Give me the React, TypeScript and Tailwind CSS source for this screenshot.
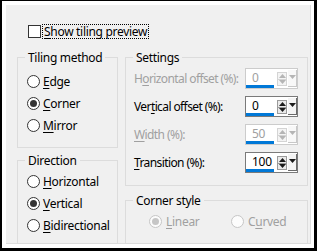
import React from "react";

function U({ children }: { children: React.ReactNode }) {
  return <span className="underline underline-offset-[2px]">{children}</span>;
}

function Radio({
  checked,
  disabled,
  children,
}: {
  checked?: boolean;
  disabled?: boolean;
  children: React.ReactNode;
}) {
  return (
    <div className="flex items-center h-[22px] whitespace-nowrap">
      <span
        className={
          disabled
            ? "w-[13px] h-[13px] shrink-0 rounded-full border border-[#c6c6c6] bg-[#fcfcfc] flex items-center justify-center"
            : "w-[13px] h-[13px] shrink-0 rounded-full border border-[#333333] bg-white flex items-center justify-center"
        }
      >
        {checked && (
          <span
            className={
              disabled
                ? "w-[7px] h-[7px] rounded-full bg-[#c6c6c6]"
                : "w-[7px] h-[7px] rounded-full bg-[#333333]"
            }
          />
        )}
      </span>
      <span className={disabled ? "ml-[4px] text-[#a0a0a0]" : "ml-[3px] text-black"}>{children}</span>
    </div>
  );
}

function Tri({ up, color }: { up?: boolean; color: string }) {
  return (
    <svg width="7" height="4" viewBox="0 0 7 4" className="block">
      {up ? (
        <path d="M0 4 L3.5 0 L7 4 Z" fill={color} />
      ) : (
        <path d="M0 0 L7 0 L3.5 4 Z" fill={color} />
      )}
    </svg>
  );
}

function Spin({ value, disabled }: { value: string; disabled?: boolean }) {
  const arrow = disabled ? "#b5b5b5" : "#1a1a1a";
  return (
    <div
      className={
        disabled
          ? "w-[53px] h-[21px] shrink-0 border border-[#cccccc] bg-white flex"
          : "w-[53px] h-[21px] shrink-0 border border-[#7a7a7a] bg-white flex"
      }
    >
      <div className="w-[29px] flex flex-col justify-between">
        <span
          className={
            disabled
              ? "pl-[6px] pt-[1px] leading-[15px] text-[#a0a0a0]"
              : "pl-[6px] pt-[1px] leading-[15px] text-black"
          }
        >
          {value}
        </span>
        <div className="w-[28px] h-[3px] bg-[#0078d7]" />
      </div>
      <div className="flex items-start pt-[3px] pl-[2px]">
        <div
          className={
            disabled
              ? "w-[10px] h-[14px] border border-[#d4d4d4] bg-[#f4f4f4] flex flex-col"
              : "w-[10px] h-[14px] border border-[#9a9a9a] bg-[#eaeaea] flex flex-col"
          }
        >
          <div
            className={
              disabled
                ? "flex-1 flex items-center justify-center border-b border-[#d4d4d4]"
                : "flex-1 flex items-center justify-center border-b border-[#9a9a9a]"
            }
          >
            <Tri up color={arrow} />
          </div>
          <div className="flex-1 flex items-center justify-center">
            <Tri color={arrow} />
          </div>
        </div>
      </div>
      <div className="flex items-start pt-[1px] pl-[1px]">
        <div
          className={
            disabled
              ? "w-[9px] h-[17px] bg-[#f8f8f8] border-r border-b border-[#c8c8c8] flex justify-center pt-[5px]"
              : "w-[9px] h-[17px] bg-[#f4f4f4] border-r border-b border-[#6a6a6a] flex justify-center pt-[5px]"
          }
        >
          <Tri color={arrow} />
        </div>
      </div>
    </div>
  );
}

function Row({
  label,
  value,
  disabled,
}: {
  label: React.ReactNode;
  value: string;
  disabled?: boolean;
}) {
  return (
    <div className="flex items-center h-[21px] whitespace-nowrap">
      <div
        className={
          disabled
            ? "w-[111px] shrink-0 text-[#a0a0a0] tracking-[-0.6px]"
            : "w-[111px] shrink-0 text-black tracking-[-0.6px]"
        }
      >
        {label}
      </div>
      <Spin value={value} disabled={disabled} />
    </div>
  );
}

function Group({
  title,
  className,
  children,
}: {
  title: string;
  className: string;
  children: React.ReactNode;
}) {
  return (
    <fieldset className={"border border-[#dcdcdc] min-w-0 " + className}>
      <legend className="ml-[7px] px-[3px] leading-[15px] text-black whitespace-nowrap">{title}</legend>
      {children}
    </fieldset>
  );
}

export default function App() {
  return (
    <div className="w-[317px] h-[251px] bg-white border-black border-t border-l-2 border-r-[3px] border-b-[3px] pt-[4px] pl-[4px] pr-[3px] pb-[4px] flex font-['Noto_Sans',sans-serif] text-[12px] leading-[15px] tracking-[-0.3px]">
      <div className="flex-1 bg-[#f0f0f0] border-r border-b border-[#dedede] flex flex-col pt-[19px] pl-[11px]">
        <div className="flex items-center h-[15px] ml-[11px] whitespace-nowrap">
          <span className="w-[13px] h-[13px] border border-[#333333] bg-white" />
          <span className="ml-[1px] border border-dotted border-black px-[1px] leading-[13px] text-black">
            <U>S</U>how tiling preview
          </span>
        </div>
        <div className="flex mt-[11px] gap-[7px]">
          <div className="w-[101px] flex flex-col gap-[5px]">
            <Group title="Tiling method" className="h-[98px]">
              <div className="mt-[5px] pl-[9px] flex flex-col">
                <Radio>
                  <U>E</U>dge
                </Radio>
                <Radio checked>
                  <U>C</U>orner
                </Radio>
                <Radio>
                  <U>M</U>irror
                </Radio>
              </div>
            </Group>
            <Group title="Direction" className="h-[91px]">
              <div className="mt-[2px] pl-[9px] flex flex-col">
                <Radio>
                  <U>H</U>orizontal
                </Radio>
                <Radio checked>
                  <U>V</U>ertical
                </Radio>
                <Radio>
                  <U>B</U>idirectional
                </Radio>
              </div>
            </Group>
          </div>
          <div className="w-[183px] flex flex-col gap-[7px]">
            <Group title="Settings" className="h-[136px]">
              <div className="mt-[3px] pl-[8px] flex flex-col gap-[7px]">
                <Row
                  disabled
                  value="0"
                  label={
                    <>
                      H<U>o</U>rizontal offset (%):
                    </>
                  }
                />
                <Row
                  value="0"
                  label={
                    <>
                      Ver<U>t</U>ical offset (%):
                    </>
                  }
                />
                <Row
                  disabled
                  value="50"
                  label={
                    <>
                      <U>W</U>idth (%):
                    </>
                  }
                />
                <Row
                  value="100"
                  label={
                    <>
                      <U>T</U>ransition (%):
                    </>
                  }
                />
              </div>
            </Group>
            <Group title="Corner style" className="h-[51px]">
              <div className="mt-[2px] pl-[23px] flex">
                <div className="w-[82px]">
                  <Radio checked disabled>
                    <U>L</U>inear
                  </Radio>
                </div>
                <Radio disabled>
                  C<U>u</U>rved
                </Radio>
              </div>
            </Group>
          </div>
        </div>
      </div>
    </div>
  );
}
